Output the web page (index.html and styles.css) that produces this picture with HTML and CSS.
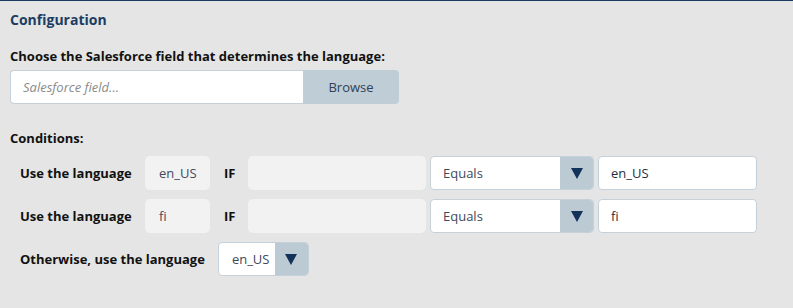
FILE: index.html
```html
<!DOCTYPE html>
<html lang="en">
<head>
  <meta charset="UTF-8">
  <title>Configuration</title>
  <link rel="stylesheet" href="styles.css">
</head>
<body>

  <div class="panel">
    <h2 class="panel-title">Configuration</h2>

    <label class="field-label">Choose the Salesforce field that determines the language:</label>
    <div class="browse-group">
      <input class="browse-input" type="text" placeholder="Salesforce field...">
      <button class="browse-btn">Browse</button>
    </div>

    <div class="field-label conditions-label">Conditions:</div>

    <div class="cond-row">
      <span class="cond-text">Use the language</span>
      <span class="lang-box">en_US</span>
      <span class="cond-if">IF</span>
      <span class="field-box"></span>
      <div class="select">
        <span class="select-value">Equals</span>
        <span class="select-arrow"><span class="tri"></span></span>
      </div>
      <input class="value-input" type="text" value="en_US">
    </div>

    <div class="cond-row">
      <span class="cond-text">Use the language</span>
      <span class="lang-box">fi</span>
      <span class="cond-if">IF</span>
      <span class="field-box"></span>
      <div class="select">
        <span class="select-value">Equals</span>
        <span class="select-arrow"><span class="tri"></span></span>
      </div>
      <input class="value-input" type="text" value="fi">
    </div>

    <div class="cond-row">
      <span class="cond-text otherwise">Otherwise, use the language</span>
      <div class="select small">
        <span class="select-value">en_US</span>
        <span class="select-arrow"><span class="tri"></span></span>
      </div>
    </div>
  </div>

</body>
</html>
```

FILE: styles.css
```css
body {
  margin: 0;
  padding: 0;
  font-family: "Open Sans", "Noto Sans", sans-serif;
  background: #e5e5e5;
}

.panel {
  box-sizing: border-box;
  height: 308px;
  border-top: 1px solid #1b3a5e;
  background: #e5e5e5;
  padding: 9px 10px 0 10px;
}

.panel-title {
  margin: 0;
  font-size: 14px;
  line-height: 19px;
  font-weight: 700;
  color: #1b3d63;
}

.field-label {
  display: block;
  margin-top: 18px;
  font-size: 13px;
  line-height: 18px;
  font-weight: 700;
  color: #111;
}

.browse-group {
  display: flex;
  width: 389px;
  height: 34px;
  margin-top: 5px;
}

.browse-input {
  flex: 1;
  box-sizing: border-box;
  height: 34px;
  margin: 0;
  padding: 0 12px;
  border: 1px solid #c5d1da;
  border-right: none;
  border-radius: 4px 0 0 4px;
  background: #fff;
  font-family: inherit;
  font-size: 13px;
  color: #333;
}

.browse-input::placeholder {
  font-style: italic;
  color: #8a8a8a;
}

.browse-btn {
  width: 96px;
  height: 34px;
  margin: 0;
  border: none;
  border-radius: 0 4px 4px 0;
  background: #bfcdd7;
  font-family: inherit;
  font-size: 13px;
  color: #2f4255;
}

.conditions-label {
  margin-top: 25px;
}

.cond-row {
  display: flex;
  align-items: center;
  height: 34px;
  margin-top: 9px;
  padding-left: 10px;
}

.cond-row + .cond-row {
  margin-top: 9px;
}

.cond-text {
  width: 125px;
  font-size: 13px;
  font-weight: 700;
  color: #111;
}

.cond-text.otherwise {
  width: auto;
  margin-right: 13px;
}

.lang-box {
  box-sizing: border-box;
  width: 65px;
  height: 34px;
  line-height: 34px;
  padding-left: 14px;
  border-radius: 5px;
  background: #f2f2f2;
  font-size: 13px;
  color: #44495e;
}

.cond-if {
  width: 24px;
  margin-left: 14px;
  font-size: 13px;
  font-weight: 700;
  color: #111;
}

.field-box {
  width: 178px;
  height: 34px;
  border-radius: 5px;
  background: #f2f2f2;
}

.select {
  display: flex;
  box-sizing: border-box;
  width: 164px;
  height: 34px;
  margin-left: 4px;
  border: 1px solid #c5d1da;
  border-radius: 4px;
  overflow: hidden;
  background: #fff;
}

.select.small {
  width: 91px;
  margin-left: 0;
}

.select-value {
  flex: 1;
  padding-left: 12px;
  line-height: 32px;
  font-size: 13px;
  color: #3d4a5a;
}

.select.small .select-value {
  padding-left: 13px;
}

.select-arrow {
  display: flex;
  align-items: center;
  justify-content: center;
  width: 33px;
  background: #bccad4;
}

.tri {
  width: 0;
  height: 0;
  border-left: 6px solid transparent;
  border-right: 6px solid transparent;
  border-top: 11px solid #13325a;
}

.value-input {
  box-sizing: border-box;
  width: 159px;
  height: 34px;
  margin: 0 0 0 4px;
  padding: 0 12px;
  border: 1px solid #c5d1da;
  border-radius: 4px;
  background: #fff;
  font-family: inherit;
  font-size: 13px;
  color: #1f2f40;
}
```
